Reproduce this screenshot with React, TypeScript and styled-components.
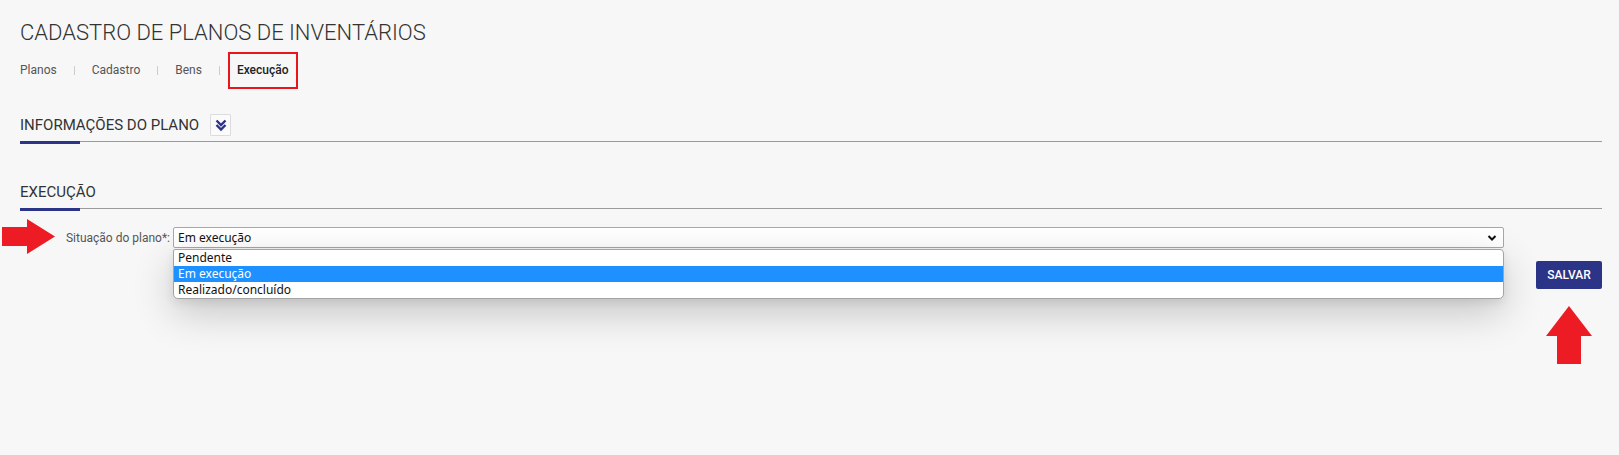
import React from 'react';
import styled, { createGlobalStyle } from 'styled-components';

const navy = '#2b3487';

const GlobalStyle = createGlobalStyle`
    body {
        margin: 0;
        background: #f7f7f7;
        font-family: Roboto, 'Liberation Sans', Arial, sans-serif;
    }
`;

const Page = styled.div`
    position: relative;
    min-height: 455px;
    padding: 20px 17px 0 20px;
    box-sizing: border-box;
`;

const Title = styled.h1`
    margin: 0;
    font-size: 22px;
    line-height: 26px;
    font-weight: 300;
    color: #333;
`;

const Crumbs = styled.nav`
    display: flex;
    align-items: center;
    margin-top: 6px;
    height: 37px;
`;

const Crumb = styled.span<{ active?: boolean; first?: boolean }>`
    font-size: 12px;
    line-height: 33px;
    color: ${({ active }) => (active ? '#222' : '#555')};
    font-weight: ${({ active }) => (active ? 500 : 400)};
    padding: ${({ active, first }) => (active ? '0 7px' : first ? '0 9px 0 0' : '0 9px')};
    border: ${({ active }) => (active ? '2px solid #e8151f' : 'none')};
`;

const Sep = styled.span`
    width: 1px;
    height: 9px;
    margin: 0 8px;
    background: #ccc;
`;

const SectionHeader = styled.div<{ top: number }>`
    position: relative;
    display: flex;
    align-items: center;
    gap: 11px;
    margin-top: ${({ top }) => top}px;
    padding-bottom: 5px;
    border-bottom: 1px solid #9a9a9a;

    &::after {
        content: '';
        position: absolute;
        left: 0;
        bottom: -3px;
        width: 60px;
        height: 3px;
        background: ${navy};
    }
`;

const SectionTitle = styled.h2`
    margin: 0;
    font-size: 15px;
    line-height: 22px;
    font-weight: 400;
    color: #333;
`;

const ToggleButton = styled.button`
    display: flex;
    align-items: center;
    justify-content: center;
    width: 21px;
    height: 22px;
    padding: 0;
    background: #fbfbfb;
    border: 1px solid #dcdcdc;
    border-radius: 1px;
`;

const FormRow = styled.div`
    display: grid;
    grid-template-columns: 150px 1fr 95px;
    column-gap: 3px;
    align-items: center;
    margin-top: 18px;
`;

const Label = styled.label`
    text-align: right;
    font-size: 12px;
    color: #555;
`;

const SelectWrap = styled.div`
    position: relative;
`;

const SelectFace = styled.div`
    display: flex;
    align-items: center;
    justify-content: space-between;
    height: 21px;
    box-sizing: border-box;
    padding: 0 6px 0 4px;
    background: #fff;
    border: 1px solid #a8a8a8;
    border-radius: 2px;
    font-family: 'Noto Sans', 'Open Sans', sans-serif;
    font-size: 12px;
    color: #111;
`;

const OptionList = styled.ul`
    position: absolute;
    top: calc(100% + 1px);
    left: 0;
    right: 0;
    margin: 0;
    padding: 0;
    list-style: none;
    background: #fff;
    border: 1px solid #a4a4a4;
    border-radius: 2px 4px 5px 5px;
    box-shadow: 0 14px 40px rgba(0, 0, 0, 0.2), 0 4px 10px rgba(0, 0, 0, 0.08);
    overflow: hidden;
    z-index: 2;
`;

const Option = styled.li<{ selected?: boolean }>`
    height: 16px;
    line-height: 16px;
    padding-left: 4px;
    font-family: 'Noto Sans', 'Open Sans', sans-serif;
    font-size: 12px;
    color: ${({ selected }) => (selected ? '#fff' : '#111')};
    background: ${({ selected }) => (selected ? '#1e90ff' : 'transparent')};
`;

const Actions = styled.div`
    display: flex;
    justify-content: flex-end;
    margin-top: 13px;
`;

const SaveButton = styled.button`
    width: 66px;
    height: 28px;
    padding: 0;
    background: ${navy};
    color: #fff;
    border: none;
    border-radius: 2px;
    font-family: Roboto, sans-serif;
    font-size: 12px;
    font-weight: 500;
`;

const Marker = styled.svg`
    position: absolute;
    pointer-events: none;
`;

const options = ['Pendente', 'Em execução', 'Realizado/concluído'];

export default function App() {
    return (
        <Page>
            <GlobalStyle />
            <Title>CADASTRO DE PLANOS DE INVENTÁRIOS</Title>
            <Crumbs>
                <Crumb first>Planos</Crumb>
                <Sep />
                <Crumb>Cadastro</Crumb>
                <Sep />
                <Crumb>Bens</Crumb>
                <Sep />
                <Crumb active>Execução</Crumb>
            </Crumbs>

            <SectionHeader top={25}>
                <SectionTitle>INFORMAÇÕES DO PLANO</SectionTitle>
                <ToggleButton>
                    <svg width="14" height="14" viewBox="0 0 14 14" fill="none" stroke={navy} strokeWidth="2.4">
                        <polyline points="2.5,2.5 7,7 11.5,2.5" />
                        <polyline points="2.5,7 7,11.5 11.5,7" />
                    </svg>
                </ToggleButton>
            </SectionHeader>

            <SectionHeader top={39}>
                <SectionTitle>EXECUÇÃO</SectionTitle>
            </SectionHeader>

            <FormRow>
                <Label>Situação do plano*:</Label>
                <SelectWrap>
                    <SelectFace>
                        <span>Em execução</span>
                        <svg width="10" height="8" viewBox="0 0 10 8" fill="none" stroke="#111" strokeWidth="2">
                            <polyline points="1.5,2 5,5.5 8.5,2" />
                        </svg>
                    </SelectFace>
                    <OptionList>
                        {options.map((o) => (
                            <Option key={o} selected={o === 'Em execução'}>
                                {o}
                            </Option>
                        ))}
                    </OptionList>
                </SelectWrap>
                <span />
            </FormRow>

            <Actions>
                <SaveButton>SALVAR</SaveButton>
            </Actions>

            <Marker width="60" height="40" viewBox="0 0 60 40" style={{ left: 0, top: 216 }}>
                <polygon points="2,11 27,11 27,3 55,20.5 27,38 27,30 2,30" fill="#ed1c24" />
            </Marker>
            <Marker width="50" height="62" viewBox="0 0 50 62" style={{ left: 1544, top: 304 }}>
                <polygon points="25,2 48,32 37,32 37,60 13,60 13,32 2,32" fill="#ed1c24" />
            </Marker>
        </Page>
    );
}
